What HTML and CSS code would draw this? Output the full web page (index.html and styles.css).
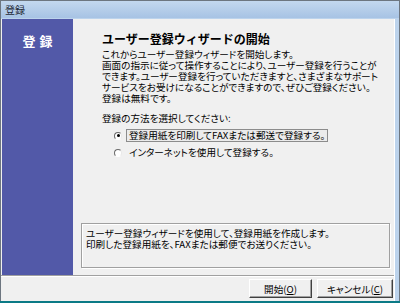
FILE: index.html
```html
<!DOCTYPE html>
<html lang="ja">

<head>
    <meta charset="UTF-8">
    <title>登録</title>
    <link rel="stylesheet" href="styles.css">
</head>

<body>
    <div class="ventana">
        <div class="barraTitulo">登録</div>
        <div class="cliente">
            <div class="principal">
                <div class="lateral">登録</div>
                <div class="contenido">
                    <h1>ユーザー登録ウィザードの開始</h1>
                    <p class="texto">
                        これからユーザー登録ウィザードを開始します。<br>
                        画面の指示に従って操作することにより、ユーザー登録を行うことが<br>
                        できます。ユーザー登録を行っていただきますと、さまざまなサポート<br>
                        サービスをお受けになることができますので、ぜひご登録ください。<br>
                        登録は無料です。
                    </p>
                    <p class="pregunta">登録の方法を選択してください:</p>
                    <div class="opciones">
                        <div class="opcion">
                            <span class="radio marcado"></span>
                            <span class="etiqueta foco">登録用紙を印刷してFAXまたは郵送で登録する。</span>
                        </div>
                        <div class="opcion">
                            <span class="radio"></span>
                            <span class="etiqueta">インターネットを使用して登録する。</span>
                        </div>
                    </div>
                    <div class="info">
                        ユーザー登録ウィザードを使用して、登録用紙を作成します。<br>
                        印刷した登録用紙を、FAXまたは郵便でお送りください。
                    </div>
                </div>
            </div>
            <div class="pie">
                <button class="boton">開始(<u>O</u>)</button>
                <button class="boton">キャンセル(<u>C</u>)</button>
            </div>
        </div>
    </div>
</body>

</html>
```

FILE: styles.css
```css
* {
    margin: 0;
    padding: 0;
    box-sizing: border-box;
}

body {
    width: 400px;
    height: 303px;
    overflow: hidden;
    background-color: #0b7a86;
    font-family: "Noto Sans CJK JP", "Noto Sans", sans-serif;
    font-feature-settings: "palt";
    color: #000;
}

.ventana {
    width: 400px;
    height: 301px;
    border: 1px solid #6d7680;
    border-bottom: none;
    background: #bcd3ec;
    display: flex;
    flex-direction: column;
}

.barraTitulo {
    height: 17px;
    padding-left: 4px;
    font-size: 10px;
    line-height: 17px;
    color: #1e2a36;
    background: linear-gradient(#c3d8ef, #a7c3e4);
}

.cliente {
    flex: 1;
    margin: 1px 4px 0 0;
    border-right: 1px solid #fff;
    background-color: #f0f0f0;
    display: flex;
    flex-direction: column;
}

.principal {
    height: 257px;
    display: flex;
    border-bottom: 1px solid #a0a0a0;
}

.lateral {
    width: 71px;
    margin-left: 1px;
    background-color: #5259a8;
    color: #fff;
    font-weight: bold;
    font-size: 13px;
    letter-spacing: 4px;
    text-align: center;
    padding-top: 12px;
    padding-left: 4px;
}

.contenido {
    flex: 1;
    padding: 12px 0 7px 29px;
    white-space: nowrap;
    display: flex;
    flex-direction: column;
    align-items: flex-start;
}

h1 {
    font-size: 12px;
    line-height: 16px;
    font-weight: bold;
    font-feature-settings: normal;
}

.texto,
.pregunta,
.etiqueta,
.info {
    font-size: 9.6px;
    line-height: 11px;
}

.texto {
    margin-top: 2px;
}

.pregunta {
    margin-top: 9px;
}

.opciones {
    margin: 5px 0 0 12px;
    display: flex;
    flex-direction: column;
    gap: 4px;
}

.opcion {
    display: flex;
    align-items: center;
    gap: 4px;
}

.radio {
    width: 8px;
    height: 8px;
    border-radius: 50%;
    border: 1px solid;
    border-color: #6a6a6a #e8e8e8 #ffffff #6a6a6a;
    background-color: #fff;
    display: flex;
    align-items: center;
    justify-content: center;
}

.marcado::after {
    content: "";
    width: 3px;
    height: 3px;
    border-radius: 50%;
    background-color: #000;
}

.etiqueta {
    padding: 0 2px;
    border: 1px solid transparent;
}

.foco {
    border-color: #8c8c8c;
    background-color: #ebebeb;
}

.info {
    margin: auto 0 0 -21px;
    width: 309px;
    height: 45px;
    border: 1px solid #a0a0a0;
    box-shadow: inset 1px 1px 0 #fff, 1px 1px 0 #fff;
    padding: 4px 0 0 4px;
}

.pie {
    flex: 1;
    border-top: 1px solid #fff;
    display: flex;
    justify-content: flex-end;
    align-items: flex-start;
    padding: 2px 1px 0 0;
    gap: 5px;
}

.boton {
    width: 63px;
    height: 19px;
    font-family: "Noto Sans CJK JP", "Noto Sans", sans-serif;
    font-feature-settings: "palt";
    font-size: 9.6px;
    background-color: #f0f0f0;
    border: 1px solid;
    border-color: #fff #404040 #404040 #fff;
    box-shadow: inset -1px -1px 0 #a0a0a0;
    color: #000;
}

.boton:last-child {
    width: 76px;
}
```
